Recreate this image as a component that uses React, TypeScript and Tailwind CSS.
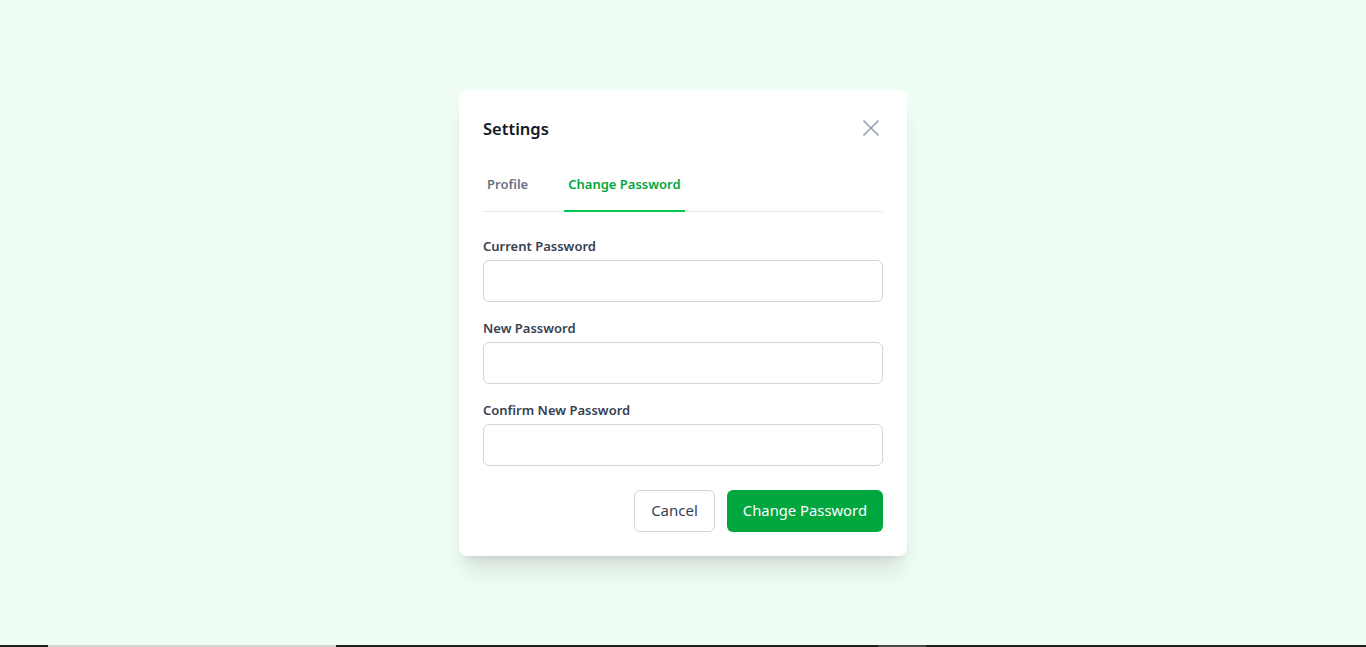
import { useState } from "react";

const fields = [
  { id: "current", label: "Current Password" },
  { id: "next", label: "New Password" },
  { id: "confirm", label: "Confirm New Password" },
];

export default function App() {
  const [tab, setTab] = useState<"profile" | "password">("password");

  return (
    <div
      className="flex h-[647px] flex-col bg-green-50"
      style={{ fontFamily: '"Noto Sans", "Open Sans", sans-serif' }}
    >
      <div className="flex flex-1 items-center justify-center">
        <div className="w-[448px] rounded-lg bg-white p-6 shadow-xl">
          <div className="flex h-7 items-center justify-between">
            <h2 className="pt-[2px] text-[16.5px] leading-7 font-semibold text-gray-900">Settings</h2>
            <button type="button" className="flex h-6 w-6 items-center justify-center text-gray-400">
              <svg width="16" height="16" viewBox="0 0 16 16" fill="none" stroke="currentColor" strokeWidth="1.7" strokeLinecap="round">
                <path d="M1 1L15 15M15 1L1 15" />
              </svg>
            </button>
          </div>

          <nav className="mt-4 flex gap-8 border-b border-gray-200">
            <button
              type="button"
              onClick={() => setTab("profile")}
              className={`-mb-px border-b-2 px-1 py-4 text-[13px] leading-5 font-semibold ${
                tab === "profile" ? "border-green-500 text-green-600" : "border-transparent text-gray-500"
              }`}
            >
              Profile
            </button>
            <button
              type="button"
              onClick={() => setTab("password")}
              className={`-mb-px border-b-2 px-1 py-4 text-[13px] leading-5 font-semibold ${
                tab === "password" ? "border-green-500 text-green-600" : "border-transparent text-gray-500"
              }`}
            >
              Change Password
            </button>
          </nav>

          <form className="mt-6 space-y-4" onSubmit={(e) => e.preventDefault()}>
            {fields.map((field) => (
              <div key={field.id}>
                <label htmlFor={field.id} className="block text-[13px] leading-5 font-semibold text-gray-700">
                  {field.label}
                </label>
                <input
                  id={field.id}
                  type="password"
                  className="mt-1 block h-[42px] w-full rounded-md border border-gray-300 px-3 text-base outline-none"
                />
              </div>
            ))}

            <div className="flex justify-end gap-3 pt-2">
              <button
                type="button"
                className="h-[42px] rounded-md border border-gray-300 bg-white px-4 text-[15px] text-gray-700"
              >
                Cancel
              </button>
              <button
                type="submit"
                className="h-[42px] rounded-md bg-green-600 px-4 text-[14.8px] text-white"
              >
                Change Password
              </button>
            </div>
          </form>
        </div>
      </div>

      <div className="flex h-[2px]">
        <div className="w-[48px] bg-[#202020]" />
        <div className="w-[288px] bg-[#d4d4d4]" />
        <div className="w-[542px] bg-[#202020]" />
        <div className="w-[48px] bg-[#4a4a4a]" />
        <div className="flex-1 bg-[#202020]" />
      </div>
    </div>
  );
}
